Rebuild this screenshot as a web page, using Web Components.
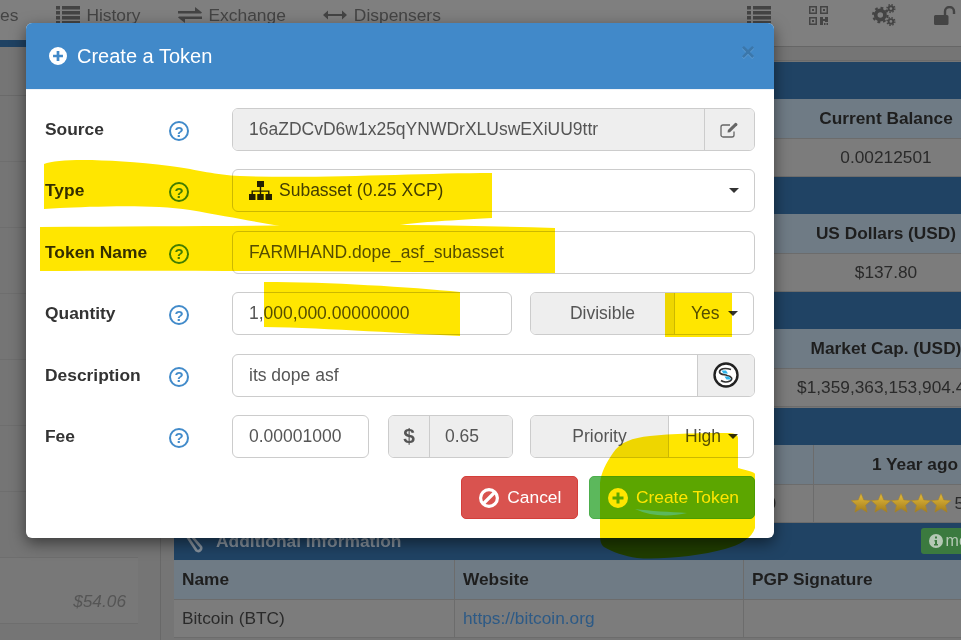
<!DOCTYPE html>
<html lang="en">
<head>
<meta charset="utf-8">
<title>Create a Token</title>
<style>
	html, body { margin: 0; padding: 0; overflow: hidden; background: #757575; }
</style>
</head>
<body>
<token-page>
	<top-nav slot="nav">
		<nav-item>es</nav-item>
		<nav-item icon="list">History</nav-item>
		<nav-item icon="exchange">Exchange</nav-item>
		<nav-item icon="arrows">Dispensers</nav-item>
		<nav-item slot="right" icon="list" space="36"></nav-item>
		<nav-item slot="right" icon="qrcode" space="41"></nav-item>
		<nav-item slot="right" icon="cogs" space="37"></nav-item>
		<nav-item slot="right" icon="unlock"></nav-item>
	</top-nav>

	<side-column slot="side">
		<side-row></side-row>
		<side-row></side-row>
		<side-row></side-row>
		<side-row></side-row>
		<side-row></side-row>
		<side-row></side-row>
		<side-row></side-row>
		<side-row boxed>$54.06</side-row>
	</side-column>

	<info-panel slot="main" columns="1fr 262px">
		<table-cell head></table-cell><table-cell head center>Current Balance</table-cell>
		<table-cell></table-cell><table-cell center>0.00212501</table-cell>
	</info-panel>
	<info-panel slot="main" columns="1fr 262px">
		<table-cell head></table-cell><table-cell head center>US Dollars (USD)</table-cell>
		<table-cell></table-cell><table-cell center>$137.80</table-cell>
	</info-panel>
	<info-panel slot="main" columns="1fr 262px">
		<table-cell head></table-cell><table-cell head center>Market Cap. (USD)</table-cell>
		<table-cell></table-cell><table-cell center>$1,359,363,153,904.42</table-cell>
	</info-panel>
	<info-panel slot="main" columns="1fr 203px" ruled>
		<table-cell head></table-cell><table-cell head center>1 Year ago</table-cell>
		<table-cell end>0</table-cell><table-cell center><star-rating value="5.0"></star-rating></table-cell>
	</info-panel>
	<info-panel slot="main" columns="281px 289px 1fr" ruled title="Additional Information" icon="paperclip" more>
		<table-cell head>Name</table-cell><table-cell head>Website</table-cell><table-cell head>PGP Signature</table-cell>
		<table-cell>Bitcoin (BTC)</table-cell><table-cell link>https://bitcoin.org</table-cell><table-cell></table-cell>
	</info-panel>

	<modal-dialog slot="modal" title="Create a Token">
		<form-row label="Source">
			<input-group>
				<group-part grow muted>16aZDCvD6w1x25qYNWDrXLUswEXiUU9ttr</group-part>
				<group-part muted icon="edit" width="50"></group-part>
			</input-group>
		</form-row>
		<form-row label="Type">
			<input-group>
				<group-part grow icon="sitemap" caret dark>Subasset (0.25 XCP)</group-part>
			</input-group>
		</form-row>
		<form-row label="Token Name">
			<input-group>
				<group-part grow>FARMHAND.dope_asf_subasset</group-part>
			</input-group>
		</form-row>
		<form-row label="Quantity">
			<input-group width="280">
				<group-part grow>1,000,000.00000000</group-part>
			</input-group>
			<input-group width="224" space="18">
				<group-part grow muted center>Divisible</group-part>
				<group-part width="79" caret>Yes</group-part>
			</input-group>
		</form-row>
		<form-row label="Description">
			<input-group>
				<group-part grow>its dope asf</group-part>
				<group-part muted icon="logo" width="57"></group-part>
			</input-group>
		</form-row>
		<form-row label="Fee">
			<input-group width="137">
				<group-part grow>0.00001000</group-part>
			</input-group>
			<input-group width="125" space="19">
				<group-part muted strong width="40" center>$</group-part>
				<group-part grow muted divided>0.65</group-part>
			</input-group>
			<input-group width="224" space="17">
				<group-part grow muted center>Priority</group-part>
				<group-part width="85" caret>High</group-part>
			</input-group>
		</form-row>
		<dialog-actions>
			<action-button kind="danger" icon="ban">Cancel</action-button>
			<action-button kind="success" icon="plus">Create Token</action-button>
		</dialog-actions>
	</modal-dialog>

	<marker-highlight slot="marker"></marker-highlight>
</token-page>

<script>
const ICONS = {
	list: `<svg viewBox="0 0 24 19" width="24" height="19"><path d="M0 0h4v3.4H0zM6 0h18v3.4H6zM0 5h4v3.4H0zM6 5h18v3.4H6zM0 10h4v3.4H0zM6 10h18v3.4H6zM0 15h4v3.4H0zM6 15h18v3.4H6z"/></svg>`,
	exchange: `<svg viewBox="0 0 24 16" width="24" height="16"><path d="M0 4h17V0l7 5.5-1 .9H0zM24 9.6v2.4H7v4L0 10.500l1-.9z"/></svg>`,
	arrows: `<svg viewBox="0 0 24 10" width="24" height="10"><path d="M0 5l5-4.500V4h14V.5L24 5l-5 4.500V6H5v3.500z"/></svg>`,
	qrcode: `<svg viewBox="0 0 19 19" width="19" height="19"><path fill-rule="evenodd" d="M0 0h8v8H0zM1.500 1.500v5h5v-5zM3 3h2v2H3zM11 0h8v8h-8zM12.500 1.500v5h5v-5zM14 3h2v2h-2zM0 11h8v8H0zM1.500 12.500v5h5v-5zM3 14h2v2H3zM11 11h3v2h2v-2h3v5h-3v-1h-2v4h-3zM15 17h1.500v2H15zM17.500 17H19v2h-1.500z"/></svg>`,
	cogs: `<svg viewBox="0 0 26 24" width="26" height="24" fill="none" stroke="currentColor"><circle cx="9" cy="12" r="5" stroke-width="4"/><circle cx="9" cy="12" r="7.800" stroke-width="2.400" stroke-dasharray="3 3.130"/><circle cx="20.500" cy="5" r="2.500" stroke-width="2"/><circle cx="20.500" cy="5" r="4.200" stroke-width="1.600" stroke-dasharray="1.600 1.700"/><circle cx="20.500" cy="19" r="2.500" stroke-width="2"/><circle cx="20.500" cy="19" r="4.200" stroke-width="1.600" stroke-dasharray="1.600 1.700"/></svg>`,
	unlock: `<svg viewBox="0 0 22 19" width="22" height="19"><path d="M1.500 9H13a1.500 1.500 0 0 1 1.500 1.500v7A1.500 1.500 0 0 1 13 19H1.500A1.500 1.500 0 0 1 0 17.500v-7A1.500 1.500 0 0 1 1.500 9z"/><path d="M11 9V5.500a4.500 4.500 0 0 1 9 0V8" fill="none" stroke="currentColor" stroke-width="2.400"/></svg>`,
	edit: `<svg viewBox="0 0 19 17" width="19" height="17" fill="none" stroke="currentColor"><path d="M14 10.500v3.500a2 2 0 0 1-2 2H3a2 2 0 0 1-2-2V6a2 2 0 0 1 2-2h7" stroke-width="1.300"/><path d="M7.500 11.500l.4-2.500L15 2a1 1 0 0 1 1.400 0l.8.8a1 1 0 0 1 0 1.400L10 11.200z" fill="currentColor" stroke="none"/></svg>`,
	sitemap: `<svg viewBox="0 0 23 19" width="23" height="19"><path d="M8 0h7v6H8zM10.800 6h1.400v3.500h8.300V13h-1.400v-2.200h-6.900V13h-1.400v-2.200H3.900V13H2.500V9.500h8.300z"/><path d="M0 13h6.500v6H0zM8.250 13h6.500v6h-6.500zM16.500 13H23v6h-6.500z"/></svg>`,
	logo: `<svg viewBox="0 0 26 26" width="26" height="26"><circle cx="13" cy="13" r="11.500" fill="#fff" stroke="#222" stroke-width="2.400"/><path d="M18 7.500C12 5.500 6.500 6.500 6.500 10C7 13 12 12.500 14 13.500C19 14.500 20 17 17 19C14 20.500 10 20 8 18.500" fill="none" stroke="#333" stroke-width="1.600"/><path d="M8.500 8.500h4.500l2 3h-4.500zM11.500 14.500h4.500l2 3h-4.500z" fill="#2fb4ea"/></svg>`,
	ban: `<svg viewBox="0 0 20 20" width="20" height="20" fill="none" stroke="currentColor" stroke-width="3.200"><circle cx="10" cy="10" r="8.400"/><path d="M4.500 15.500l11-11"/></svg>`,
	plus: `<svg viewBox="0 0 20 20" width="20" height="20"><path fill="currentColor" fill-rule="evenodd" d="M10 0a10 10 0 1 0 0 20a10 10 0 1 0 0-20zM8.500 4.500h3v4h4v3h-4v4h-3v-4h-4v-3h4z"/></svg>`,
	plusSmall: `<svg viewBox="0 0 20 20" width="18" height="18"><path fill="currentColor" fill-rule="evenodd" d="M10 0a10 10 0 1 0 0 20a10 10 0 1 0 0-20zM8.500 4.500h3v4h4v3h-4v4h-3v-4h-4v-3h4z"/></svg>`,
	info: `<svg viewBox="0 0 14 14" width="14" height="14"><path fill="currentColor" fill-rule="evenodd" d="M7 0a7 7 0 1 0 0 14a7 7 0 1 0 0-14zM6 2.500h2v2H6zM5.500 6h2.500v4h1v1.500H5V10h1V7.500h-.5z"/></svg>`,
	paperclip: `<svg viewBox="0 0 20 24" width="20" height="24" fill="none" stroke="currentColor" stroke-width="2.600"><path d="M2 3l13 15a3 3 0 0 1-4.500 3.500L1.500 8a2 2 0 0 1 3-2.500l9 11"/></svg>`,
};

class FaIcon extends HTMLElement {
	connectedCallback() {
		if (!this.shadowRoot) {
			this.attachShadow({ mode: "open" });
		}
		this.shadowRoot.innerHTML = `
			<style>
				:host { display: inline-flex; align-items: center; justify-content: center; flex: none; }
				svg { display: block; fill: currentColor; }
				svg[fill="none"] { fill: none; }
			</style>
			${ICONS[this.getAttribute("name")] ?? ""}
		`;
	}
}
customElements.define("fa-icon", FaIcon);

// the page behind the dialog is painted in its dimmed colours directly
class TokenPage extends HTMLElement {
	constructor() {
		super();
		this.attachShadow({ mode: "open" }).innerHTML = `
			<style>
				:host {
					display: block;
					position: relative;
					width: 961px;
					height: 640px;
					overflow: hidden;
					background: #757575;
					font-family: "Liberation Sans", Arial, sans-serif;
				}
				.columns { display: flex; }
				.main {
					display: flex;
					flex-direction: column;
					flex: none;
					width: 843px;
					margin-top: 13px;
					padding-top: 1px;
					border-top: 1px solid #6b6b6b;
				}
			</style>
			<slot name="nav"></slot>
			<div class="columns">
				<slot name="side"></slot>
				<div class="main"><slot name="main"></slot></div>
			</div>
			<slot name="modal"></slot>
			<slot name="marker"></slot>
		`;
	}
}
customElements.define("token-page", TokenPage);

class TopNav extends HTMLElement {
	constructor() {
		super();
		this.attachShadow({ mode: "open" }).innerHTML = `
			<style>
				:host {
					display: flex;
					justify-content: space-between;
					height: 47px;
					box-sizing: border-box;
					border-bottom: 1px solid #666;
					background: #7f7f7f;
				}
				.group { display: flex; gap: 37.500px; height: 30px; }
				.group.right { gap: 0; padding-right: 4.500px; }
			</style>
			<div class="group"><slot></slot></div>
			<div class="group right"><slot name="right"></slot></div>
		`;
	}
}
customElements.define("top-nav", TopNav);

class NavItem extends HTMLElement {
	connectedCallback() {
		const icon = this.getAttribute("icon");
		const space = this.getAttribute("space");
		this.attachShadow({ mode: "open" }).innerHTML = `
			<style>
				:host {
					display: flex;
					align-items: center;
					gap: 6.500px;
					height: 30px;
					${space ? `margin-right: ${space}px;` : ""}
					color: #444;
					font-size: 17.400px;
				}
				fa-icon { width: 24px; }
			</style>
			${icon ? `<fa-icon name="${icon}"></fa-icon>` : ""}
			<slot></slot>
		`;
	}
}
customElements.define("nav-item", NavItem);

class SideColumn extends HTMLElement {
	constructor() {
		super();
		this.attachShadow({ mode: "open" }).innerHTML = `
			<style>
				:host {
					display: block;
					flex: none;
					width: 160px;
					margin-right: 13px;
					border-right: 1px solid #686868;
					height: 593px;
				}
				.bar { height: 7px; margin-top: -7px; background: #1f4263; }
				.rule { height: 49px; box-sizing: border-box; border-bottom: 1px solid #6a6a6a; }
				.wrap { width: 138px; }
			</style>
			<div class="bar"></div>
			<div class="rule"></div>
			<div class="wrap"><slot></slot></div>
		`;
	}
}
customElements.define("side-column", SideColumn);

class SideRow extends HTMLElement {
	constructor() {
		super();
		this.attachShadow({ mode: "open" }).innerHTML = `
			<style>
				:host {
					display: flex;
					align-items: flex-end;
					justify-content: flex-end;
					box-sizing: border-box;
					height: 66px;
					padding: 0 12px 11px 0;
					border-bottom: 1px solid #6e6e6e;
					color: #555;
					font-size: 17.300px;
					font-style: italic;
				}
				:host([boxed]) { background: #787878; }
			</style>
			<slot></slot>
		`;
	}
}
customElements.define("side-row", SideRow);

class InfoPanel extends HTMLElement {
	connectedCallback() {
		const title = this.getAttribute("title");
		const icon = this.getAttribute("icon");
		const columns = this.getAttribute("columns");
		this.removeAttribute("title");
		this.attachShadow({ mode: "open" }).innerHTML = `
			<style>
				:host { display: block; height: 115.200px; }
				.bar {
					display: flex;
					align-items: center;
					height: 37px;
					box-sizing: border-box;
					padding: 0 27px 0 12px;
					background: #204364;
					color: #86919c;
					font-size: 17.400px;
					font-weight: bold;
				}
				.bar fa-icon { margin-right: 10px; }
				.bar .more {
					display: flex;
					align-items: center;
					gap: 3px;
					margin-left: auto;
					height: 26px;
					padding: 0 8px;
					border-radius: 3px;
					background: #3b7a3f;
					color: #b5c9b5;
					font-size: 16px;
					font-weight: normal;
				}
				.bar .more fa-icon { margin: 0; }
				.grid { display: grid; grid-template-columns: ${columns}; grid-template-rows: 40px 38px; }
			</style>
			<div class="bar">
				${icon ? `<fa-icon name="${icon}"></fa-icon>` : ""}
				${title ? `<span>${title}</span>` : ""}
				${this.hasAttribute("more") ? `<span class="more"><fa-icon name="info"></fa-icon>more</span>` : ""}
			</div>
			<div class="grid"><slot></slot></div>
		`;
		this.querySelectorAll("table-cell").forEach((cell) => {
			if (this.hasAttribute("ruled")) {
				cell.setAttribute("ruled", "");
			}
		});
	}
}
customElements.define("info-panel", InfoPanel);

class TableCell extends HTMLElement {
	constructor() {
		super();
		this.attachShadow({ mode: "open" }).innerHTML = `
			<style>
				:host {
					display: flex;
					align-items: center;
					box-sizing: border-box;
					min-width: 0;
					padding: 0 8px;
					border-bottom: 1px solid #6c6c6c;
					background: #7c7c7c;
					color: #2a2a2a;
					font-size: 17.300px;
					white-space: nowrap;
				}
				:host([ruled]) { border-right: 1px solid #6c6c6c; }
				:host([head]) { background: #6f7b85; color: #1e1e1e; font-weight: bold; }
				:host([center]) { justify-content: center; }
				:host([end]) { justify-content: flex-end; padding-right: 37px; }
				:host([link]) { color: #2d5a86; }
			</style>
			<slot></slot>
		`;
	}
}
customElements.define("table-cell", TableCell);

class StarRating extends HTMLElement {
	connectedCallback() {
		const star = `<svg viewBox="0 0 20 20" width="20" height="20"><polygon fill="url(#gold)" stroke="#a88428" stroke-width="0.500" points="10,0.500 12.800,7 19.800,7.600 14.500,12.200 16.100,19.200 10,15.500 3.900,19.200 5.500,12.200 0.200,7.600 7.200,7"/></svg>`;
		this.attachShadow({ mode: "open" }).innerHTML = `
			<style>
				:host { display: flex; align-items: center; gap: 3px; color: #2a2a2a; }
				.stars { display: flex; }
				svg { display: block; }
				.defs { position: absolute; width: 0; height: 0; }
			</style>
			<svg class="defs"><defs><linearGradient id="gold" x1="0" y1="0" x2="0" y2="1"><stop offset="0" stop-color="#e6bd3c"/><stop offset="1" stop-color="#a27c1c"/></linearGradient></defs></svg>
			<span class="stars">${star.repeat(5)}</span>
			<span>${this.getAttribute("value")}</span>
		`;
	}
}
customElements.define("star-rating", StarRating);

class ModalDialog extends HTMLElement {
	connectedCallback() {
		const title = this.getAttribute("title");
		this.removeAttribute("title");
		this.attachShadow({ mode: "open" }).innerHTML = `
			<style>
				:host {
					position: absolute;
					z-index: 2;
					top: 23px;
					left: 26px;
					width: 748px;
					display: block;
					border-radius: 6px;
					background: #fff;
					box-shadow: 0 5px 15px rgba(0, 0, 0, 0.5);
					overflow: hidden;
				}
				header {
					display: flex;
					align-items: center;
					height: 67px;
					box-sizing: border-box;
					padding: 0 19px 0 23px;
					border-bottom: 1px solid #eef3f8;
					background: #4189c9;
					color: #fff;
					font-size: 20px;
				}
				.icon { margin-right: 10px; }
				.close {
					margin-left: auto;
					margin-bottom: 9px;
					color: #3b77ab;
					font-size: 24px;
					font-weight: bold;
					line-height: 1;
					text-shadow: 0 1px 0 rgba(255, 255, 255, 0.15);
				}
				main {
					display: flex;
					flex-direction: column;
					gap: 18.400px;
					padding: 18px 19px 19px;
				}
			</style>
			<header>
				<fa-icon class="icon" name="plusSmall"></fa-icon>
				<span>${title}</span>
				<span class="close">×</span>
			</header>
			<main><slot></slot></main>
		`;
	}
}
customElements.define("modal-dialog", ModalDialog);

class FormRow extends HTMLElement {
	connectedCallback() {
		this.attachShadow({ mode: "open" }).innerHTML = `
			<style>
				:host {
					display: grid;
					grid-template-columns: 124px 20px 1fr;
					align-items: center;
					height: 43px;
				}
				.label { color: #333; font-size: 17.400px; font-weight: bold; }
				.help {
					display: flex;
					align-items: center;
					justify-content: center;
					box-sizing: border-box;
					width: 20px;
					height: 20px;
					margin-top: 3px;
					border: 2px solid #428bca;
					border-radius: 50%;
					color: #428bca;
					font-size: 15px;
					font-weight: bold;
					line-height: 1;
				}
				.fields { display: flex; margin-left: 43px; }
			</style>
			<span class="label">${this.getAttribute("label")}</span>
			<span class="help">?</span>
			<div class="fields"><slot></slot></div>
		`;
	}
}
customElements.define("form-row", FormRow);

class InputGroup extends HTMLElement {
	connectedCallback() {
		const width = this.getAttribute("width");
		const space = this.getAttribute("space");
		this.attachShadow({ mode: "open" }).innerHTML = `
			<style>
				:host {
					display: flex;
					box-sizing: border-box;
					flex: ${width ? `none` : `1`};
					${width ? `width: ${width}px;` : ""}
					${space ? `margin-left: ${space}px;` : ""}
					height: 43px;
					border: 1px solid #ccc;
					border-radius: 6px;
					overflow: hidden;
					background: #fff;
				}
			</style>
			<slot></slot>
		`;
	}
}
customElements.define("input-group", InputGroup);

class GroupPart extends HTMLElement {
	connectedCallback() {
		const icon = this.getAttribute("icon");
		const width = this.getAttribute("width");
		this.attachShadow({ mode: "open" }).innerHTML = `
			<style>
				:host {
					display: flex;
					align-items: center;
					box-sizing: border-box;
					min-width: 0;
					${width ? `flex: none; width: ${width}px; border-left: 1px solid #ccc;` : ""}
					padding: 0 15px 0 16px;
					color: #555;
					font-size: 17.500px;
					white-space: nowrap;
				}
				:host([grow]) { flex: 1; }
				:host([muted]) { background: #eee; }
				:host([dark]) { color: #444; }
				:host([center]) { justify-content: center; padding: 0; }
				:host([strong]) { font-size: 21px; font-weight: bold; }
				:host(:first-child[width]) { border-left: 0; }
				:host([divided]) { border-left: 1px solid #ccc; padding-left: 15px; }
				:host([icon]:not([grow])) { justify-content: center; padding: 0; color: #666; }
				.lead { color: #222; margin-right: 7px; }
				.caret {
					width: 0;
					height: 0;
					margin-left: auto;
					border-top: 5px solid #333;
					border-left: 5px solid transparent;
					border-right: 5px solid transparent;
				}
			</style>
			${icon ? `<fa-icon class="lead" name="${icon}" ${this.hasAttribute("grow") ? "" : `style="margin:0;color:inherit"`}></fa-icon>` : ""}
			<slot></slot>
			${this.hasAttribute("caret") ? `<span class="caret"></span>` : ""}
		`;
	}
}
customElements.define("group-part", GroupPart);

class DialogActions extends HTMLElement {
	constructor() {
		super();
		this.attachShadow({ mode: "open" }).innerHTML = `
			<style>
				:host { display: flex; justify-content: flex-end; gap: 11px; height: 43px; }
			</style>
			<slot></slot>
		`;
	}
}
customElements.define("dialog-actions", DialogActions);

class ActionButton extends HTMLElement {
	connectedCallback() {
		this.attachShadow({ mode: "open" }).innerHTML = `
			<style>
				:host {
					display: flex;
					align-items: center;
					gap: 8px;
					box-sizing: border-box;
					padding: 0 15px 0 17.500px;
					border: 1px solid;
					border-radius: 5px;
					color: #fff;
					font-size: 17.400px;
				}
				:host([kind="danger"]) { background: #d9534f; border-color: #d43f3a; padding-right: 16px; }
				:host([kind="success"]) { background: #5cb85c; border-color: #4cae4c; }
			</style>
			<fa-icon name="${this.getAttribute("icon")}"></fa-icon>
			<slot></slot>
		`;
	}
}
customElements.define("action-button", ActionButton);

// the yellow pen strokes somebody drew on top of the screenshot
class MarkerHighlight extends HTMLElement {
	constructor() {
		super();
		this.attachShadow({ mode: "open" }).innerHTML = `
			<style>
				:host {
					position: absolute;
					z-index: 3;
					top: 0;
					left: 0;
					display: block;
					mix-blend-mode: multiply;
					pointer-events: none;
				}
				svg { display: block; }
				path { fill: #ffe600; fill-rule: evenodd; }
			</style>
			<svg viewBox="0 0 961 640" width="961" height="640">
				<path d="M44 164C60 158 110 159 170 166C200 170 215 175 240 176C320 179 420 173 492 173L492 218C440 221 420 222 392 226L280 226C250 221 225 216 190 210C150 204 90 207 60 208L44 209Z"/>
				<path d="M40 227C150 226 240 226 330 225C400 224 480 226 555 228L555 273C400 272 200 270 40 271Z"/>
				<path d="M264 282C330 282 410 287 460 292L460 336C410 334 330 328 264 327Z"/>
				<path d="M665 293L732 293L732 337L665 337Z"/>
				<path d="M613 453C620 442 632 438 650 436C680 433 710 433 727 433C733 433 738 434 738 438L738 468C745 470 755 472 755 474L755 528C752 538 740 545 725 549C700 556 660 560 637 558C625 556 612 552 604 547C601 545 600 540 600 536L600 483C601 473 606 463 613 453ZM635 509C650 511 670 512 687 513C675 516 660 516 650 514C645 513 640 511 635 509Z"/>
			</svg>
		`;
	}
}
customElements.define("marker-highlight", MarkerHighlight);
</script>
</body>
</html>
